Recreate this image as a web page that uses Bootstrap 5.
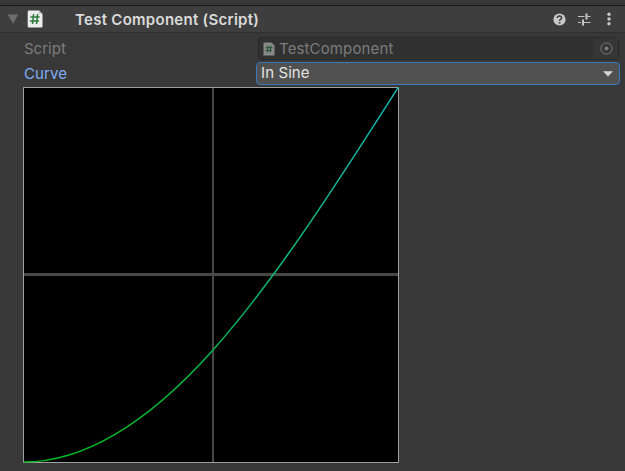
<!DOCTYPE html>
<html lang="en">
<head>
<meta charset="utf-8">
<title>Test Component</title>
<link href="https://cdn.jsdelivr.net/npm/bootstrap@5.3.0/dist/css/bootstrap.min.css" rel="stylesheet">
<style>
body{background:#383838;color:#d2d2d2;font-family:Inter,sans-serif;font-size:15px;line-height:20px;height:471px;overflow:hidden}
svg{display:block;flex:none}
.top-strip{height:6px;border-bottom:1px solid #1a1a1a}
.comp-head{height:27px;background:#3e3e3e;border-bottom:1px solid #303030;padding-left:7px;padding-right:9px}
.comp-title{font-weight:600;font-size:15px;margin-left:32px;padding-top:2px;letter-spacing:.28px;color:#dadada}
.help{margin-right:12px}
.tune{margin-right:13px}
.props{padding:4px 5px 2px 24px}
.prop-label{width:232px;letter-spacing:.1px}
.script-label{color:#7c7c7c;padding-top:1px;letter-spacing:0}
.curve-label{color:#7fadf5;padding-top:1px}
.object-field{height:23px;margin-left:2px;margin-right:1px;background:#313131;border:1px solid #292929;border-radius:4px;color:#7c7c7c;letter-spacing:.13px;padding-left:4px}
.picker{width:24px;height:21px;background:#363636}
.curve-row{padding-top:2px}
.pick-field{height:23px;background:#515151;border:1px solid #3a79bb;border-radius:4px;color:#e4e4e4;padding:0 6px 0 4px;letter-spacing:.1px}
.pick-field span{margin-top:-1px}
.plot{margin-left:23px}
</style>
<script src="https://cdn.jsdelivr.net/npm/bootstrap@5.3.0/dist/js/bootstrap.bundle.min.js"></script>
</head>
<body class="m-0">
<div class="top-strip"></div>
<header class="comp-head d-flex align-items-center">
  <svg width="12" height="10"><path d="M.7 .5H11.3L6 9.7Z" fill="#6c6c6c"/></svg>
  <svg class="ms-2" width="16" height="18" viewBox="0 0 16 18"><path d="M1.5 .5H12L15.5 4V16.2Q15.5 17.5 14.2 17.5H2Q.7 17.5.7 16.2V1.7Q.7.5 2 .5Z" fill="#ececec"/><path d="M12 .5V4h3.5Z" fill="#c4c4c4"/><path d="M6.6 4L5.5 14M10.6 4L9.5 14M3.4 7H12.6M2.9 11H12.1" stroke="#2c7a3b" stroke-width="1.5"/></svg>
  <div class="comp-title">Test Component (Script)</div>
  <div class="d-flex align-items-center ms-auto">
    <svg class="help" width="13" height="13" viewBox="0 0 13 13"><circle cx="6.5" cy="6.5" r="6.1" fill="#c8c8c8"/><path d="M4.4 5.1Q4.4 3.1 6.5 3.1T8.6 5C8.6 6.2 6.6 6.3 6.6 8" fill="none" stroke="#3e3e3e" stroke-width="1.5"/><rect x="5.8" y="9" width="1.6" height="1.6" fill="#3e3e3e"/></svg>
    <svg class="tune" width="13" height="13" viewBox="0 0 13 13"><path d="M0 3.5H6.5M9.5 3.5H12.5M0 9.5H3M5.5 9.5H12.5" stroke="#c4c4c4" stroke-width="1.2"/><path d="M8.5 .5V6.5M5 6.5V12.5" stroke="#c8c8c8" stroke-width="2"/></svg>
    <svg width="12" height="14" viewBox="0 0 12 14"><g fill="#c8c8c8"><circle cx="5" cy="2.3" r="1.7"/><circle cx="5" cy="7" r="1.7"/><circle cx="5" cy="11.7" r="1.7"/></g></svg>
  </div>
</header>
<main>
  <div class="props">
    <div class="d-flex align-items-center">
      <div class="prop-label script-label">Script</div>
      <div class="object-field d-flex align-items-center flex-grow-1">
        <svg width="12" height="14" viewBox="0 0 12 14"><path d="M1.5 .5H8.5L11.5 3.5V13.5H.5V1.5Z" fill="#898989"/><path d="M5 3.5L4.3 10.5M7.8 3.5L7.1 10.5M2.6 5.7H9.4M2.3 8.5H9.1" stroke="#2b5633" stroke-width="1.2"/></svg>
        <span class="ms-1">TestComponent</span>
        <div class="picker ms-auto d-flex align-items-center justify-content-center">
          <svg width="13" height="13" viewBox="0 0 13 13"><circle cx="6.5" cy="6.5" r="5.6" fill="none" stroke="#7b7b7b"/><circle cx="6.5" cy="6.5" r="1.9" fill="#7b7b7b"/></svg>
        </div>
      </div>
    </div>
    <div class="curve-row d-flex align-items-center">
      <div class="prop-label curve-label">Curve</div>
      <div class="pick-field d-flex align-items-center flex-grow-1">
        <span>In Sine</span>
        <svg class="ms-auto" width="10" height="6"><path d="M0 .3H10L5 5.6Z" fill="#d6d6d6"/></svg>
      </div>
    </div>
  </div>
  <svg class="plot" width="376" height="376" viewBox="0 0 376 376">
    <defs><linearGradient id="ramp" gradientUnits="userSpaceOnUse" x1="0" y1="375" x2="0" y2="0"><stop offset="0" stop-color="#04b81c"/><stop offset=".5" stop-color="#0cb878"/><stop offset="1" stop-color="#14b8b8"/></linearGradient></defs>
    <rect width="376" height="376" fill="#000"/>
    <rect x="189" y="1" width="2" height="374" fill="#484848"/>
    <rect x="1" y="186" width="374" height="3" fill="#484848"/>
    <rect x=".5" y=".5" width="375" height="375" fill="none" stroke="#a0a0a0"/>
    <path d="M.5 375C63 375 125.5 334.6 188 265.2C250.5 195.7 313 98.2 375.5 0" fill="none" stroke="url(#ramp)" stroke-width="1.5"/>
  </svg>
</main>
</body>
</html>
